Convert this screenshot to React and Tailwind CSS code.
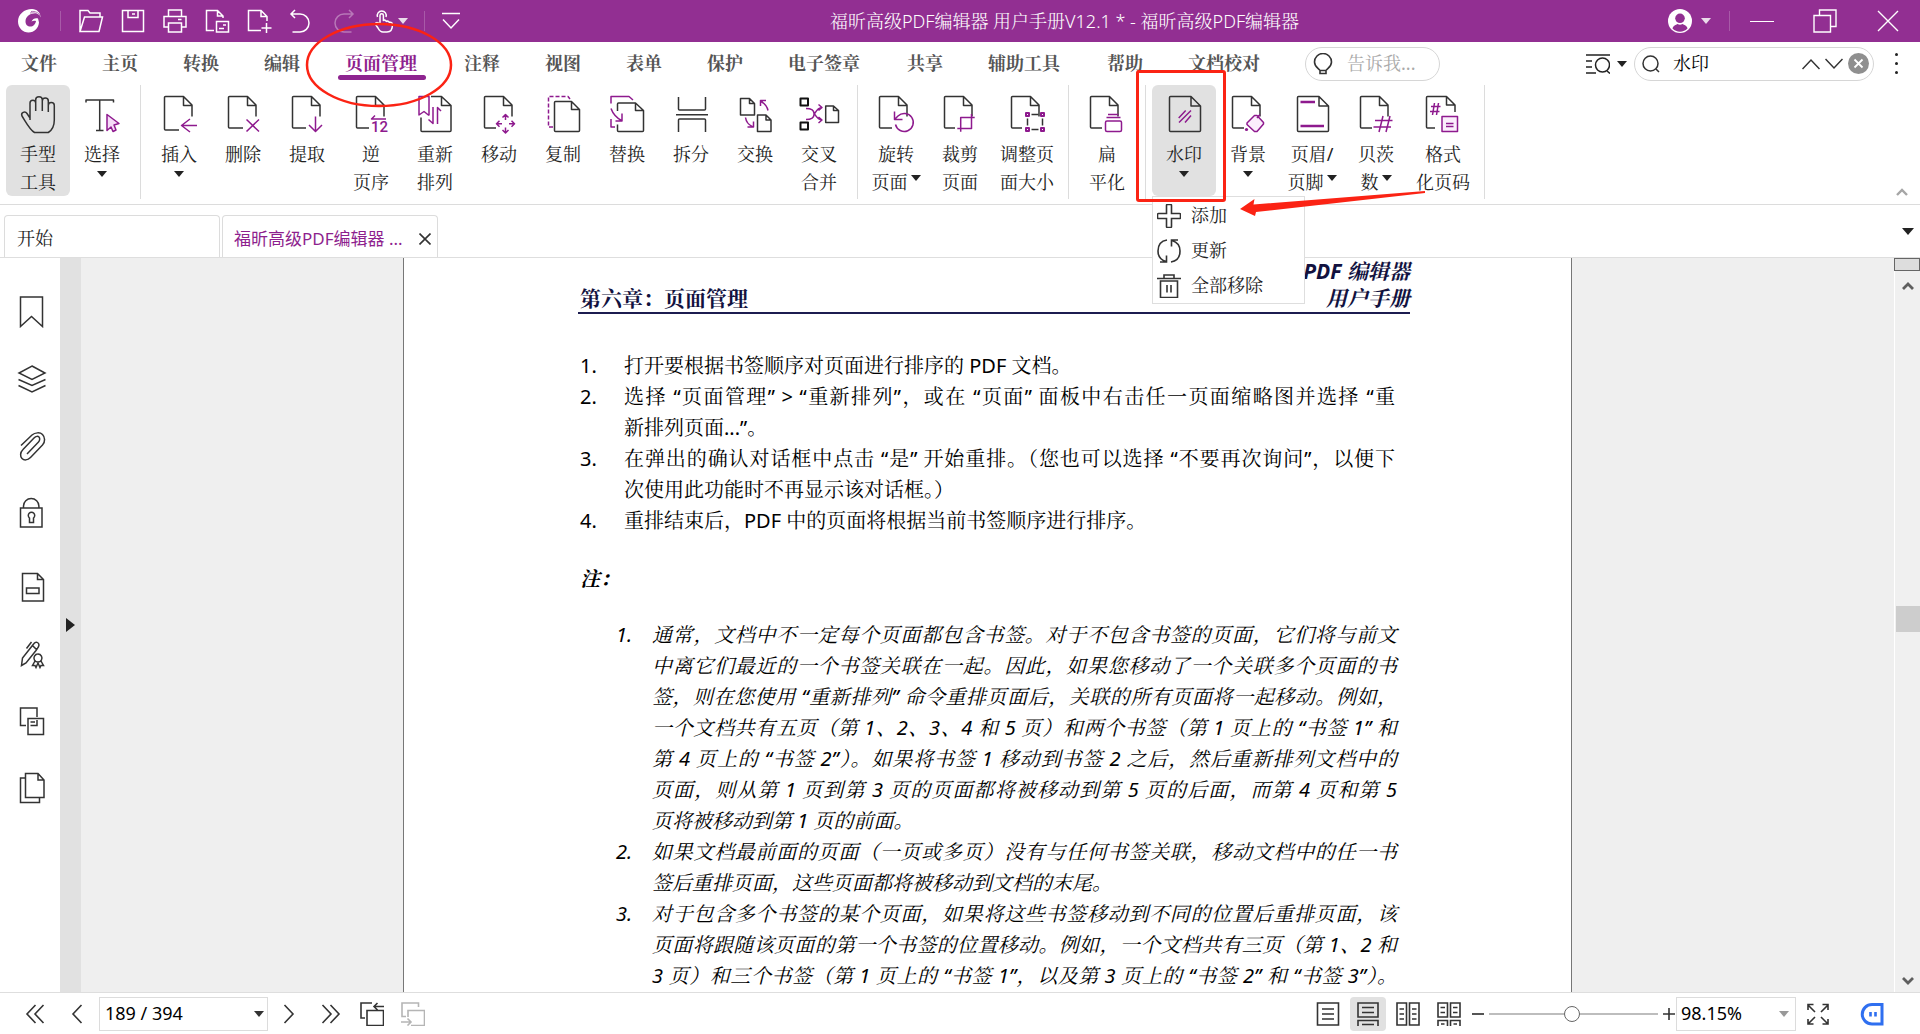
import React from "react";

const INK = "#333333";
const ACC = "#8e1a8e";

/* ---------- shared pieces ---------- */

function Caret({ className = "" }) {
  return (
    <svg viewBox="0 0 10 6" className={"h-[6px] w-[10px] shrink-0 " + className} fill="currentColor" aria-hidden="true">
      <path d="M0 0H10L5 6Z" />
    </svg>
  );
}

function Line({ d, c = INK, w = 1.5, fill = "none", dash }) {
  return <path d={d} stroke={c} strokeWidth={w} fill={fill} strokeDasharray={dash} strokeLinejoin="round" />;
}

function Sheet({ x = 7, bottom = 23, y = 34 }) {
  return (
    <g transform={`translate(${x} 0)`}>
      <Line d={`M${bottom - 8} ${y}H1.5a1 1 0 0 1-1-1V3.5a1 1 0 0 1 1-1H19.5L28 11V22.5M19.5 2.5V11.5H28`} />
    </g>
  );
}

/* ---------- ribbon drawings, 44 x 40 ---------- */

const art = {
  hand: (
    <Line d="M14 26V9a2.8 2.8 0 0 1 5.7 0V17M19.7 9V5.7a3.3 3 0 0 1 6.6 0V17M26.3 7a3 3 0 0 1 6 0V18M32.3 11.5a3 3 0 0 1 6 0V26c0 5-2 10-6 12.5H18.5C14 36 11 30 6 22c-1.500-3.500 3-5.500 5-2.500L14 24" />
  ),
  select: (
    <>
      <Line d="M6 8.500V6H33.500V8.500M19.700 6V36.500M16 36.500H23.500" />
      <Line c={ACC} fill="#f6dcf8" d="M27 20.500V36.500L31 33L33 37.500L36 36L34 31L39 29.500Z" />
    </>
  ),
  insert: (
    <>
      <Sheet y={36} />
      <Line c={ACC} d="M40 31.500H24.500M33 25L24.500 31.500L33 38" />
    </>
  ),
  remove: (
    <>
      <Sheet />
      <Line c={ACC} d="M25.500 25.500L38 37.500M38 25.500L25.500 37.500" />
    </>
  ),
  extract: (
    <>
      <Sheet bottom={22} />
      <Line c={ACC} d="M30.500 22.500V37M24 31L30.500 37.500L37 31" />
    </>
  ),
  reverse: (
    <>
      <Sheet bottom={21} />
      <Line c={ACC} d="M37 25H22.500L26 21.500" />
      <text x="22" y="38" fontSize="15" fontWeight="500" fill={ACC} className="font-['Roboto',sans-serif]">12</text>
    </>
  ),
  rearrange: (
    <>
      <Line c={ACC} d="M16 21.500V2.500H6V21L11 17.500L16 21.500" />
      <Line d="M18 2.500H28.500L38 11.500V36.500a1 1 0 0 1-1 1H9a1 1 0 0 1-1-1V23.500M28.500 2.500V11.500H38" />
      <Line c={ACC} d="M20 13V29.500L15.500 25.500M24.500 30V13.500L28 17" />
    </>
  ),
  move: (
    <>
      <Sheet bottom={20} />
      <Line c={ACC} d="M25.500 23.500L28.500 20.500L31.500 23.500M28.500 20.500V26M25.500 36L28.500 39L31.500 36M28.500 39V33.500M22.500 26.700L19.500 29.700L22.500 32.700M19.500 29.700H25M34.500 26.700L37.500 29.700L34.500 32.700M37.500 29.700H32" />
    </>
  ),
  copy: (
    <>
      <Line c={ACC} dash="4 2" d="M12 33H7.500V2.500H27L29 5" />
      <Line d="M13.500 8.500a1 1 0 0 1 1-1H30.500L38.500 15.500V36.500a1 1 0 0 1-1 1H14.500a1 1 0 0 1-1-1ZM30.500 7.500V15.500H38.500" />
    </>
  ),
  replace: (
    <>
      <Line c={ACC} d="M6 9.500V2.500H24L28 6M6 25V33H10M6 14.500C8 20 12 24 16.500 26.500M17 19.500V27H10.500" />
      <Line d="M12.500 17V10a1 1 0 0 1 1-1H30.500L38.500 16.500V36.500a1 1 0 0 1-1 1H13.500a1 1 0 0 1-1-1V30.500M30.500 9V16.500H38.500" />
    </>
  ),
  split: (
    <Line d="M9.500 3V15a1 1 0 0 0 1 1H35.500a1 1 0 0 0 1-1V3M7 20.700H39M9.500 38V26a1 1 0 0 1 1-1H35.500a1 1 0 0 1 1 1V38" />
  ),
  swap: (
    <>
      <Line d="M7.500 4.500H16.500L21.500 9.500V21H7.500ZM16.500 4.500V9.500H21.500M24.500 21H33L38 26V37.500H24.500ZM33 21V26H38" />
      <Line c={ACC} d="M12.500 23.500C13 27 16 31 19.500 32.700M20.500 27.500V33H14.500M35 16.500C34 12 31 9 27.500 7M27.500 12V6.500H33" />
    </>
  ),
  interleave: (
    <>
      <Line c="#111111" d="M3.500 4.500H11V11.500H3.500ZM3.500 28.500H11V35.500H3.500Z" w={2} />
      <Line c={ACC} d="M9 14.500C15 14.500 17 16 17 19.500S19 13.500 25 13.500M9 25.500C15 25.500 17 24 17 20.500S19 26 25 26M21.500 10.500L25 13.500L21.500 16.500M21.500 23L25 26L21.500 29" />
      <Line d="M28.700 12H36.500L41.500 16.500V28.500H28.700ZM36.500 12V16.500H41.500" />
    </>
  ),
  rotate: (
    <>
      <Sheet x={5} bottom={21} />
      <Line c={ACC} d="M21.500 30.500A9 9 0 1 0 24 22L20.500 25.500M20.500 17.500V25.500H28.500" />
    </>
  ),
  crop: (
    <>
      <Sheet x={6} bottom={19} />
      <Line c={ACC} d="M22.700 37.700V23.500H36.700M19.300 34.500H33.500V20" />
    </>
  ),
  resize: (
    <>
      <Sheet x={6} bottom={19} />
      <Line d="M26.500 20.500H33.500M26.500 35.500H33.500M22.500 24.500V31.500M37.500 24.500V31.500" />
      <Line c={ACC} w={2} d="M21 19H24V22H21ZM36 19H39V22H36ZM21 34H24V37H21ZM36 34H39V37H36Z" />
    </>
  ),
  flatten: (
    <>
      <Sheet x={5} bottom={20} />
      <Line c={ACC} d="M23 20.500H33.500M21.500 23.500H35.500M22 27H35a1.500 1.500 0 0 1 1.500 1.500V36a1.500 1.500 0 0 1-1.500 1.500H22a1.500 1.500 0 0 1-1.500-1.500V28.500a1.500 1.500 0 0 1 1.500-1.500Z" />
    </>
  ),
  watermark: (
    <>
      <Line d="M7.500 3.500a1 1 0 0 1 1-1H29L38.500 12V36.500a1 1 0 0 1-1 1H8.500a1 1 0 0 1-1-1ZM29 2.500V12H38.500" />
      <Line c={ACC} d="M16.700 24L23.700 16.500M17 28.500L29 16.500M23 28.500L29 21.500" />
    </>
  ),
  background: (
    <>
      <Sheet x={6} bottom={20} />
      <Line c={ACC} fill="#fbeefc" d="M21 29L28.500 21.500H31L37.500 28.500V30L31 37.500H28.500L21 30.500ZM31 24L34 20.500" />
      <circle cx="20.500" cy="35.500" r="1.600" fill={ACC} />
    </>
  ),
  header: (
    <>
      <Line d="M7.500 3.500a1 1 0 0 1 1-1H29L38.500 12V36.500a1 1 0 0 1-1 1H8.500a1 1 0 0 1-1-1ZM29 2.500V12H38.500" />
      <Line c={ACC} w={2.500} d="M10.500 8H25M10.500 32H34" />
    </>
  ),
  bates: (
    <>
      <Sheet x={6} bottom={20} />
      <Line c={ACC} d="M21 26.500H38.500M19.500 33H37M25 38L29 22M32 38L36 22" />
    </>
  ),
  format: (
    <>
      <Line d="M14 34H6.500a1 1 0 0 1-1-1V3.500a1 1 0 0 1 1-1H25.500L34 11V18M25.500 2.500V11H34" />
      <Line c={ACC} d="M10 12.500H19.500M9 17.500H18.500M11.500 21L13.500 9M15.500 21L17.500 9" />
      <Line c={ACC} fill="#fbeefc" d="M21 22.500H36.500V37.500H21ZM25 29.500H32.500M25 32.500H32.500" />
    </>
  ),
};

function Tool({ name, lines, caret, active, wide, children }) {
  return (
    <div className={wide ? "relative w-[70px] shrink-0" : "relative w-16 shrink-0"}>
      <button
        type="button"
        className={
          "flex h-[111px] w-full flex-col items-center rounded-md pt-[9px] text-[18px] leading-7 whitespace-nowrap " +
          (active ? "bg-[#e1e1e1]" : "bg-transparent")
        }
      >
        <svg viewBox="0 0 44 40" className="mb-[6px] h-10 w-11 shrink-0 overflow-visible" fill="none" aria-hidden="true">
          {art[name]}
        </svg>
        <span className="block">{lines[0]}</span>
        {lines[1] ? (
          <span className="flex items-center gap-[3px]">
            {lines[1]}
            {caret && <Caret className="mb-2" />}
          </span>
        ) : (
          caret && <Caret className="mt-[3px]" />
        )}
      </button>
      {children}
    </div>
  );
}

const Divider = () => <div className="mx-[6px] h-[114px] w-px shrink-0 bg-[#dcdcdc]" />;

/* ---------- title bar ---------- */

const quick = [
  ["打开", <path d="M1 22.500V1.500H9L11 4H21V8M1 22.500L5.500 8H23.500L20 22.500Z" />],
  ["保存", <path d="M1.500 1.500H22.500V22.500H1.500ZM7 1.500V8.500H17V1.500M11 5H14" />],
  ["打印", <path d="M5.500 7V1H18.500V7M5.500 18H1V7.500H23V18H18.500M5.500 14H18.500V23H5.500ZM15 10.500H18.500" />],
  ["页面设置", <path d="M9 21.500H1.500V1.500H12.500L18 7V9M12.500 1.500V7H18M11.500 12.500H23.500V23H11.500ZM14 19.500H19M18 16H21" />],
  ["新建", <path d="M14 21.500H1.500V1.500H14L20 7.500V12M14 1.500V7.500H20M19.500 14V24M14.500 19H24.500" />],
  ["撤销", <path d="M6 1L2 5L6 9M2.500 5H11a8.500 8.500 0 0 1 0 18H3.500" />],
  ["恢复", <path d="M18 1L22 5L18 9M21.500 5H13a8.500 8.500 0 0 0 0 18H20.500" />],
];

function TitleBar() {
  return (
    <header className="flex h-[42px] shrink-0 items-center bg-[#922f92] text-white">
      <svg viewBox="0 0 24 24" className="ml-[18px] h-6 w-6 shrink-0" fill="currentColor" aria-hidden="true">
        <path d="M14 0C6 0 0 5.500 0 12.500 0 19 5 23.500 10.500 23.500 16.500 23.500 20.500 19 21 13.500L20 9.500C18 8.500 14.500 9.500 13.500 12.500 15 11.500 16.500 11.500 18 12 17.500 15.500 15 17.500 12.500 17.500 9.500 17.500 7.500 15.500 7.500 12.500 7.500 8 11.500 4.500 16.500 4.500 19.500 4.500 22 6 23 8.500 22 3.500 19 0 14 0Z" />
        <path d="M13 2.500C17 2 20.500 3.500 22.500 7M12 4C15 3.500 19 4 21 7" stroke="#922f92" strokeWidth="0.700" fill="none" />
      </svg>
      <div className="ml-[18px] h-5 w-px bg-[#a85aa8]" />
      <div className="ml-[9px] flex">
        {quick.map(([label, d], i) => (
          <button key={label} type="button" aria-label={label} className={"flex h-8 w-[42px] items-center justify-center " + (i === 6 ? "opacity-35" : "")}>
            <svg viewBox="0 0 25 24" className="h-6 w-[25px]" fill="none" stroke="currentColor" strokeWidth="1.500">{d}</svg>
          </button>
        ))}
        <button type="button" aria-label="触摸模式" className="flex h-8 w-[42px] items-center gap-1 pl-[10px]">
          <svg viewBox="0 0 20 24" className="h-6 w-5 shrink-0" fill="none" stroke="currentColor" strokeWidth="1.500">
            <path d="M6 15V6.500a1.700 1.700 0 0 1 3.400 0V12C10 10.500 12.500 11 12.500 13C13 11.500 15.500 12 15.500 14C16 13 18.500 13 18.500 15.500C18.500 20 17 23 13 23H9C6 23 5 21 4 19L1.500 15.500C1 13.500 3.500 12.500 6 15.500M3.500 8a4.500 4.500 0 1 1 8.500 0" />
          </svg>
          <Caret className="text-[#eadcea]" />
        </button>
      </div>
      <div className="ml-[18px] h-5 w-px bg-[#a85aa8]" />
      <button type="button" aria-label="自定义快速访问" className="ml-[16px]">
        <svg viewBox="0 0 20 18" className="h-[18px] w-5" fill="none" stroke="currentColor" strokeWidth="1.500"><path d="M1 1.500H19M2 7.500L10 16L18 7.500" /></svg>
      </button>
      <h1 className="flex-1 text-center text-[18px] font-light">福昕高级PDF编辑器 用户手册V12.1 * - 福昕高级PDF编辑器</h1>
      <button type="button" aria-label="账户" className="flex items-center gap-[9px]">
        <svg viewBox="0 0 24 24" className="h-6 w-6"><circle cx="12" cy="12" r="12" fill="white" /><path d="M4.500 19.500C5 16.500 8 16 9.500 15Q12 16.500 14.500 15C16 16 19 16.500 19.500 19.500A10.500 10.500 0 0 1 4.500 19.500Z" fill="#922f92" /><circle cx="12" cy="9.300" r="4.800" fill="#922f92" /></svg>
        <Caret className="text-[#eadcea]" />
      </button>
      <div className="ml-[18px] h-5 w-px bg-[#a85aa8]" />
      <button type="button" aria-label="最小化" className="ml-5 flex h-8 w-6 items-center"><span className="h-px w-6 bg-white" /></button>
      <button type="button" aria-label="还原" className="ml-[39px]">
        <svg viewBox="0 0 24 24" className="h-6 w-6" fill="none" stroke="currentColor" strokeWidth="1.400"><path d="M1 6.500H17.500V23H1ZM6.500 6.500V1H23V17.500H17.500" /></svg>
      </button>
      <button type="button" aria-label="关闭" className="mr-[21px] ml-[40px]">
        <svg viewBox="0 0 22 22" className="h-[22px] w-[22px]" fill="none" stroke="currentColor" strokeWidth="1.400"><path d="M1 1L21 21M21 1L1 21" /></svg>
      </button>
    </header>
  );
}

/* ---------- menu row ---------- */

const menus = ["文件", "主页", "转换", "编辑", "页面管理", "注释", "视图", "表单", "保护", "电子签章", "共享", "辅助工具", "帮助", "文档校对"];

function MenuRow() {
  return (
    <nav className="flex h-[43px] shrink-0 items-center pl-[21px] text-[18px] font-bold text-[#555555]">
      <div className="flex gap-[45px]">
        {menus.map((m) =>
          m === "页面管理" ? (
            <div key={m} className="relative w-[74px]">
              <button type="button" className="whitespace-nowrap text-[#8e1f8e]">{m}</button>
              <span className="absolute -bottom-[3px] -left-[7px] h-[5px] w-[88px] rounded-full bg-[#8e2490]" />
              <svg viewBox="0 0 148 86" className="pointer-events-none absolute -top-[28px] -left-[40px] z-30 h-[86px] w-[148px]" fill="none" aria-hidden="true">
                <ellipse cx="74" cy="43" rx="72" ry="41" stroke="#fb2314" strokeWidth="2.500" />
              </svg>
            </div>
          ) : (
            <button key={m} type="button" className={m.length === 4 ? "w-[74px] text-left whitespace-nowrap" : "whitespace-nowrap"}>{m}</button>
          )
        )}
      </div>
      <label className="ml-[43px] flex h-[34px] w-[135px] shrink-0 items-center rounded-full border border-[#d6d6d6] pl-[7px]">
        <svg viewBox="0 0 20 22" className="h-[22px] w-5 shrink-0" fill="none" stroke={INK} strokeWidth="1.600" aria-hidden="true">
          <path d="M7 17.500C6 15.500 1.500 14 1.500 9a8.300 8.300 0 0 1 17 0C18.500 14 14 15.500 13 17.500ZM7 18V20.500H13V18" />
        </svg>
        <input aria-label="告诉我" placeholder="告诉我..." className="ml-[14px] w-20 bg-transparent font-normal outline-none placeholder:text-[#a9a9a9]" />
      </label>
      <button type="button" aria-label="高级查找" className="ml-auto flex shrink-0 items-center gap-[7px] text-[#222222]">
        <svg viewBox="0 0 24 20" className="h-5 w-6" fill="none" stroke="currentColor" strokeWidth="1.500" aria-hidden="true">
          <path d="M0 1H24M0 7H6M0 13H6M0 19H10M21 17L24 19.500" /><circle cx="16.500" cy="11" r="7" />
        </svg>
        <Caret />
      </button>
      <div className="ml-[7px] flex h-[34px] w-60 shrink-0 items-center rounded-full border border-[#d6d6d6] pr-1 pl-[7px]">
        <svg viewBox="0 0 18 18" className="h-[18px] w-[18px] shrink-0" fill="none" stroke={INK} strokeWidth="1.500" aria-hidden="true"><circle cx="8.500" cy="8.500" r="7.500" /><path d="M14 14L17 17" /></svg>
        <input aria-label="查找" defaultValue="水印" className="ml-[13px] w-0 flex-1 bg-transparent font-normal text-black outline-none" />
        <button type="button" aria-label="上一个"><svg viewBox="0 0 18 12" className="h-3 w-[18px]" fill="none" stroke={INK} strokeWidth="1.500"><path d="M0.500 11L9 2L17.500 11" /></svg></button>
        <button type="button" aria-label="下一个" className="mx-[5px]"><svg viewBox="0 0 18 12" className="h-3 w-[18px]" fill="none" stroke={INK} strokeWidth="1.500"><path d="M0.500 1L9 10L17.500 1" /></svg></button>
        <button type="button" aria-label="清除"><svg viewBox="0 0 21 21" className="h-[21px] w-[21px]"><circle cx="10.500" cy="10.500" r="10.500" fill="#8f8f8f" /><path d="M6.500 6.500L14.500 14.500M14.500 6.500L6.500 14.500" stroke="white" strokeWidth="1.800" /></svg></button>
      </div>
      <button type="button" aria-label="更多" className="mr-[21px] ml-[21px] flex w-1 shrink-0 flex-col gap-[6px]">
        <span className="h-[3px] w-[3px] rounded-full bg-[#222222]" />
        <span className="h-[3px] w-[3px] rounded-full bg-[#222222]" />
        <span className="h-[3px] w-[3px] rounded-full bg-[#222222]" />
      </button>
    </nav>
  );
}

/* ---------- ribbon ---------- */

const dropItems = [
  ["添加", <path d="M9.500 1.500a1 1 0 0 1 1-1h3a1 1 0 0 1 1 1V9.500H22.500a1 1 0 0 1 1 1v3a1 1 0 0 1-1 1H14.500V22.500a1 1 0 0 1-1 1h-3a1 1 0 0 1-1-1V14.500H1.500a1 1 0 0 1-1-1v-3a1 1 0 0 1 1-1H9.500Z" />],
  ["更新", <path d="M10 1C3.500 2 1 7 1 12S4 21 9 22.500M3 23H9.500V16.500M14 23C20.500 22 23 17 23 12S20 3 15 1.500M21 1H14.500V7.500" />],
  ["全部移除", <path d="M0 4.500H24M7 4V1H17V4M3.500 7H20.500V23.500H3.500ZM10 11V18.500M14 11V18.500" />],
];

function Ribbon() {
  return (
    <div className="flex h-[120px] shrink-0 border-b border-[#dcdcdc] pl-[6px] text-[#222222]">
      <Tool name="hand" lines={["手型", "工具"]} active />
      <Tool name="select" lines={["选择"]} caret />
      <Divider />
      <Tool name="insert" lines={["插入"]} caret />
      <Tool name="remove" lines={["删除"]} />
      <Tool name="extract" lines={["提取"]} />
      <Tool name="reverse" lines={["逆", "页序"]} />
      <Tool name="rearrange" lines={["重新", "排列"]} />
      <Tool name="move" lines={["移动"]} />
      <Tool name="copy" lines={["复制"]} />
      <Tool name="replace" lines={["替换"]} />
      <Tool name="split" lines={["拆分"]} />
      <Tool name="swap" lines={["交换"]} />
      <Tool name="interleave" lines={["交叉", "合并"]} />
      <Divider />
      <Tool name="rotate" lines={["旋转", "页面"]} caret />
      <Tool name="crop" lines={["裁剪", "页面"]} />
      <Tool name="resize" lines={["调整页", "面大小"]} wide />
      <Divider />
      <Tool name="flatten" lines={["扁", "平化"]} />
      <Divider />
      <Tool name="watermark" lines={["水印"]} caret active>
        <div role="menu" className="absolute top-[111px] left-0 z-20 w-[153px] border border-[#dedede] bg-white pt-px">
          {dropItems.map(([label, d]) => (
            <button key={label} type="button" role="menuitem" className="flex h-[35px] w-full items-center gap-[10px] pl-1 text-[18px] whitespace-nowrap">
              <svg viewBox="0 0 24 24" className="h-6 w-6" fill="none" stroke={INK} strokeWidth="1.600" aria-hidden="true">{d}</svg>
              {label}
            </button>
          ))}
        </div>
        <div className="pointer-events-none absolute -top-[15px] -left-[16px] z-30 h-[132px] w-[90px] rounded-[3px] border-3 border-[#fb2314]" />
        <svg viewBox="0 0 185 30" className="pointer-events-none absolute top-[104px] left-[88px] z-30 h-[30px] w-[185px]" fill="#fb2314" aria-hidden="true">
          <path d="M0 20L14.500 10L13.500 15.500L185 2V4L16 23L15 27Z" />
        </svg>
      </Tool>
      <Tool name="background" lines={["背景"]} caret />
      <Tool name="header" lines={["页眉/", "页脚"]} caret />
      <Tool name="bates" lines={["贝茨", "数"]} caret />
      <Tool name="format" lines={["格式", "化页码"]} wide />
      <Divider />
      <button type="button" aria-label="折叠功能区" className="mt-auto mr-3 mb-2 ml-auto">
        <svg viewBox="0 0 12 8" className="h-2 w-3" fill="none" stroke="#a6a6a6" strokeWidth="2.400"><path d="M1 7L6 2L11 7" /></svg>
      </button>
    </div>
  );
}

/* ---------- document tabs ---------- */

function Tabs() {
  return (
    <div className="flex h-[53px] shrink-0 items-end gap-[2px] border-b border-[#dedede] pl-1">
      <button type="button" className="h-[42px] w-[216px] rounded-t-[4px] border border-b-0 border-[#dcdcdc] pt-1 pl-3 text-left text-[18px] text-[#222222]">开始</button>
      <div className="flex h-[42px] w-[216px] items-center rounded-t-[4px] border border-b-0 border-[#dcdcdc] pt-1 pl-[11px]">
        <button type="button" className="flex-1 text-left font-['Noto_Sans','Noto_Sans_CJK_SC',sans-serif] text-[17px] whitespace-nowrap text-[#8e1f8e]">福昕高级PDF编辑器 ...</button>
        <button type="button" aria-label="关闭标签" className="mr-[6px]">
          <svg viewBox="0 0 12 12" className="h-3 w-3" fill="none" stroke={INK} strokeWidth="1.600"><path d="M0.500 0.500L11.500 11.500M11.500 0.500L0.500 11.500" /></svg>
        </button>
      </div>
      <button type="button" aria-label="标签列表" className="mr-[6px] mb-[22px] ml-auto text-[#222222]">
        <svg viewBox="0 0 12 7" className="h-[7px] w-3" fill="currentColor"><path d="M0 0H12L6 7Z" /></svg>
      </button>
    </div>
  );
}

/* ---------- side panel ---------- */

const panels = [
  ["书签", <path d="M4.500 1H26.500V30.500L15.500 20.500L4.500 30.500Z" />],
  ["图层", <path d="M16 3L29 10L16 16.500L3 10ZM2.500 16.500L16 22.500L29.500 16.500M2.500 22.500L16 29L29.500 22.500" />],
  ["附件", <path d="M5 15.500L16 5C19 2.500 24 2 26.500 4.500S29.500 12 26.500 15L14.500 27.500C11.500 30.500 8 30.500 6 28.500S4 22.500 7 19.500L18 8C20 6 22 6 23 7S24 10.500 22.500 12L11 24" />],
  ["安全", <path d="M4.500 11H26V30H4.500ZM7.500 11V9a7.700 7.500 0 0 1 15.400 0V11M13.500 25.500V21a3.200 3.200 0 1 1 4 0V25.500Z" />],
  ["字段", <path d="M6.500 2.500H21.500L27.500 8.500V30H6.500ZM21.500 2.500V8.500H27.500M10.500 17H23V22.500H10.500Z" />],
  ["签名", <path d="M5.500 27.500L6.500 20L18 5.500C19.500 3.500 23 4 23 7C23 9 21 11 20 12.500L10 25ZM17 8L20.500 11.500M15.500 4L10.500 10.500M22 16a4 4 0 1 1-.1 0M19 23L16.500 27.500H19L20 29.500L22 25L24 29.500L25 27.500H27.500L25 23" />],
  ["对比", <path d="M10 20.500H4.500V3H21V12M12 13.500H27.500V29.500H12ZM14.500 20.500H21V15M14.500 17H19" />],
  ["页面", <path d="M9.500 1.500H22L28 8V25.500H9.500ZM22 1.500V8H28M9.500 6H4.500V30.500H23.500V26" />],
];

function SidePanel() {
  return (
    <>
      <aside className="flex w-[60px] shrink-0 flex-col items-center bg-white pt-5 pl-1">
        {panels.map(([label, d], i) => (
          <button key={label} type="button" aria-label={label} className={"flex h-[67px] w-full shrink-0 items-center justify-center " + (i === 4 ? "mt-[7px]" : "")}>
            <svg viewBox="0 0 32 32" className="h-8 w-8" fill="none" stroke={INK} strokeWidth="1.500">{d}</svg>
          </button>
        ))}
      </aside>
      <div className="flex w-[21px] shrink-0 items-center justify-center bg-[#e1e1e1]">
        <button type="button" aria-label="展开面板"><svg viewBox="0 0 9 14" className="h-[14px] w-[9px]" fill="#222222"><path d="M0 0L9 7L0 14Z" /></svg></button>
      </div>
    </>
  );
}

/* ---------- document ---------- */

const steps = [
  ["打开要根据书签顺序对页面进行排序的 PDF 文档。"],
  ["选择 “页面管理” > “重新排列”，或在 “页面” 面板中右击任一页面缩略图并选择 “重", "新排列页面...”。"],
  ["在弹出的确认对话框中点击 “是” 开始重排。（您也可以选择 “不要再次询问”，以便下", "次使用此功能时不再显示该对话框。）"],
  ["重排结束后，PDF 中的页面将根据当前书签顺序进行排序。"],
];

const notes = [
  [
    "通常，文档中不一定每个页面都包含书签。对于不包含书签的页面，它们将与前文",
    "中离它们最近的一个书签关联在一起。因此，如果您移动了一个关联多个页面的书",
    "签，则在您使用 “重新排列” 命令重排页面后，关联的所有页面将一起移动。例如，",
    "一个文档共有五页（第 1、2、3、4 和 5 页）和两个书签（第 1 页上的 “书签 1” 和",
    "第 4 页上的 “书签 2”）。如果将书签 1 移动到书签 2 之后，然后重新排列文档中的",
    "页面，则从第 1 页到第 3 页的页面都将被移动到第 5 页的后面，而第 4 页和第 5",
    "页将被移动到第 1 页的前面。",
  ],
  ["如果文档最前面的页面（一页或多页）没有与任何书签关联，移动文档中的任一书", "签后重排页面，这些页面都将被移动到文档的末尾。"],
  [
    "对于包含多个书签的某个页面，如果将这些书签移动到不同的位置后重排页面，该",
    "页面将跟随该页面的第一个书签的位置移动。例如，一个文档共有三页（第 1、2 和",
    "3 页）和三个书签（第 1 页上的 “书签 1”，以及第 3 页上的 “书签 2” 和 “书签 3”）。",
  ],
];

function Numbered({ items, gap, fillLast }) {
  return items.map((rows, i) => (
    <li key={i} className="flex">
      <span className={gap}>{i + 1}.</span>
      <p className="min-w-0 flex-1">
        {rows.map((r, j) => {
          const full = j < rows.length - 1 || (fillLast && i === items.length - 1);
          return (
            <span key={j} className={full ? "block whitespace-nowrap [text-align-last:justify]" : "block whitespace-nowrap"}>{r}</span>
          );
        })}
      </p>
    </li>
  ));
}

function Document() {
  return (
    <main className="min-w-0 flex-1 overflow-hidden bg-[#efefef]">
      <article className="mx-auto min-h-full w-full max-w-[1169px] border-x border-[#777777] bg-white pr-[161px] pl-[174px] text-[20px] leading-[31px] text-black">
        <header className="flex items-end justify-between border-b-2 border-[#1c1c50] pl-[2px] text-[21px] leading-[27px] font-bold text-[#12123f]">
          <h2>第六章：页面管理</h2>
          <div className="text-right italic">
            <div>PDF 编辑器</div>
            <div>用户手册</div>
          </div>
        </header>
        <ol className="mt-9 mr-[15px] ml-[2px]"><Numbered items={steps} gap="w-11 shrink-0" /></ol>
        <h3 className="mt-[27px] ml-[2px] font-bold italic">注：</h3>
        <ol className="mt-[25px] mr-[13px] ml-[38px] italic"><Numbered items={notes} gap="w-9 shrink-0" fillLast /></ol>
      </article>
    </main>
  );
}

function ScrollBar() {
  return (
    <div className="flex w-[26px] shrink-0 flex-col bg-[#f0f0f0]">
      <div className="h-[13px] border border-[#666666] bg-[#dddddd]" />
      <div className="flex flex-1 flex-col items-center border-l border-white">
        <button type="button" aria-label="向上滚动" className="flex h-7 items-center"><svg viewBox="0 0 12 9" className="h-[9px] w-3" fill="none" stroke="#5f5f5f" strokeWidth="2.800"><path d="M1 8L6 3L11 8" /></svg></button>
        <div className="flex-[307]" />
        <div className="h-[26px] w-6 bg-[#cdcdcd]" />
        <div className="flex-[338]" />
        <button type="button" aria-label="向下滚动" className="flex h-[22px] items-center"><svg viewBox="0 0 12 9" className="h-[9px] w-3" fill="none" stroke="#5f5f5f" strokeWidth="2.800"><path d="M1 1L6 6L11 1" /></svg></button>
      </div>
    </div>
  );
}

/* ---------- status bar ---------- */

function IconButton({ label, w = "w-6", box = "0 0 24 24", className = "", children }) {
  return (
    <button type="button" aria-label={label} className={"shrink-0 " + className}>
      <svg viewBox={box} className={"h-6 " + w} fill="none" stroke="currentColor" strokeWidth="1.600">{children}</svg>
    </button>
  );
}

function StatusBar() {
  return (
    <footer className="flex h-[42px] shrink-0 items-center border-t border-[#dedede] bg-white pl-[25px] text-[18px] text-[#333333]">
      <IconButton label="第一页" w="w-5" box="0 0 20 24"><path d="M10.500 3L2 12L10.500 21M18.500 3L10 12L18.500 21" /></IconButton>
      <IconButton label="上一页" w="w-3" box="0 0 12 24" className="ml-[26px]"><path d="M10.500 3L2 12L10.500 21" /></IconButton>
      <div className="relative ml-4 h-[34px] w-[169px] shrink-0">
        <select aria-label="页码" className="h-full w-full appearance-none border border-[#dcdcdc] bg-white pl-[5px] text-black outline-none"><option>189 / 394</option></select>
        <Caret className="pointer-events-none absolute top-[14px] right-1" />
      </div>
      <IconButton label="下一页" w="w-3" box="0 0 12 24" className="ml-[15px]"><path d="M1.500 3L10 12L1.500 21" /></IconButton>
      <IconButton label="最后一页" w="w-5" box="0 0 20 24" className="ml-[26px]"><path d="M1.500 3L10 12L1.500 21M9.500 3L18 12L9.500 21" /></IconButton>
      <IconButton label="上一视图" className="ml-[19px]"><path d="M5 16H1V1H12M7 8.500H23.500V23.500H7ZM24 4.500H14M17.500 1L14 4.500L17.500 8" /></IconButton>
      <IconButton label="下一视图" className="ml-[17px] text-[#b5b5b5]"><path d="M5 14.500H1V1H17.500V5M10 23.500H23.500V8.500H7V15M0 20H10M6.500 16.500L10 20L6.500 23.500" /></IconButton>

      <IconButton label="单页" className="ml-auto"><path d="M1.500 1H22.500V23H1.500ZM6 7H18M6 12H18M6 17H18" /></IconButton>
      <button type="button" aria-label="连续" className="ml-[10px] flex h-[34px] w-9 shrink-0 items-center justify-center rounded-[4px] bg-[#e1e1e1]">
        <svg viewBox="0 0 24 24" className="h-6 w-6" fill="none" stroke="currentColor" strokeWidth="1.600"><path d="M2 1H22V15H2ZM6 5.500H18M6 10.500H18M2 24V18.500H22V24M6 22.500H18" /></svg>
      </button>
      <IconButton label="双页" className="ml-[10px]"><path d="M1 1H10.500V23H1ZM13.500 1H23V23H13.500ZM3.500 7H8M3.500 12H8M3.500 17H8M16 7H20.500M16 12H20.500M16 17H20.500" /></IconButton>
      <IconButton label="双页连续" className="ml-[17px]"><path d="M1 1H10.500V15H1ZM13.500 1H23V15H13.500ZM3.500 5.500H8M3.500 10.500H8M16 5.500H20.500M16 10.500H20.500M1 24V18.500H10.500V24M13.500 24V18.500H23V24M4 22H7.500M16.500 22H20" /></IconButton>
      <button type="button" aria-label="缩小" className="ml-[11px] flex h-6 w-3 shrink-0 items-center"><span className="h-[2px] w-3 bg-[#555555]" /></button>
      <input
        type="range"
        aria-label="缩放"
        defaultValue="49"
        className="mx-[5px] h-5 w-[169px] shrink-0 appearance-none bg-transparent [&::-webkit-slider-runnable-track]:h-[2px] [&::-webkit-slider-runnable-track]:bg-[#bdbdbd] [&::-webkit-slider-thumb]:-mt-[7px] [&::-webkit-slider-thumb]:h-4 [&::-webkit-slider-thumb]:w-4 [&::-webkit-slider-thumb]:appearance-none [&::-webkit-slider-thumb]:rounded-full [&::-webkit-slider-thumb]:border [&::-webkit-slider-thumb]:border-[#666666] [&::-webkit-slider-thumb]:bg-white"
      />
      <IconButton label="放大" w="w-3" box="0 0 12 24"><path d="M0 12H12M6 6V18" /></IconButton>
      <div className="relative ml-px h-[34px] w-[120px] shrink-0">
        <select aria-label="缩放比例" className="h-full w-full appearance-none border border-[#dcdcdc] bg-white pl-1 text-black outline-none"><option>98.15%</option></select>
        <svg viewBox="0 0 10 6" className="pointer-events-none absolute top-[14px] right-[7px] h-[6px] w-[10px]" fill="#999999"><path d="M0 0H10L5 6Z" /></svg>
      </div>
      <IconButton label="全屏" className="ml-[10px]"><path d="M9 10L2 3M2 8V2.500H7.500M15 10L22 3M16.500 2.500H22V8M9 15L2 22M2 17V22H7.500M15 15L22 22M22 17V22H16.500" /></IconButton>
      <IconButton label="助手" className="mr-9 ml-[30px] text-[#2f6ff0]">
        <path d="M22 2.500V22H12A9.750 9.750 0 0 1 12 2.500Z" strokeWidth="3" /><path d="M10.500 10V14.500M15.500 10V14.500" strokeWidth="2.600" />
      </IconButton>
    </footer>
  );
}

export default function App() {
  return (
    <div className="flex h-screen flex-col overflow-hidden bg-white font-['Noto_Sans','Noto_Serif_CJK_SC','Noto_Sans_CJK_SC',sans-serif]">
      <TitleBar />
      <MenuRow />
      <Ribbon />
      <Tabs />
      <div className="flex min-h-0 flex-1">
        <SidePanel />
        <Document />
        <ScrollBar />
      </div>
      <StatusBar />
    </div>
  );
}
